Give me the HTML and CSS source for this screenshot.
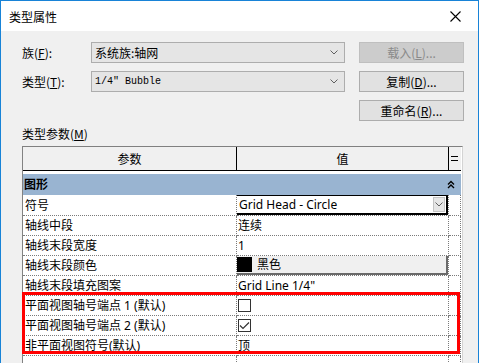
FILE: index.html
```html
<!DOCTYPE html>
<html lang="zh">
<head>
  <meta charset="UTF-8">
  <title>类型属性</title>
  <link rel="stylesheet" href="styles.css">
</head>
<body>
  <div class="window">
    <div class="titlebar">
      <span class="title">类型属性</span>
      <svg class="close" width="11" height="11" viewBox="0 0 11 11"><path d="M0.5 0.5L10.5 10.5M10.5 0.5L0.5 10.5" stroke="#000" stroke-width="1.1" fill="none"/></svg>
    </div>

    <div class="content">
      <div class="form-row">
        <label class="label">族(<u>F</u>):</label>
        <div class="combo">
          <span>系统族:轴网</span>
          <svg class="chev" width="8" height="5" viewBox="0 0 8 5"><path d="M0.5 0.5L4 4L7.5 0.5" stroke="#606060" fill="none"/></svg>
        </div>
        <button class="btn" disabled>载入(<u>L</u>)...</button>
      </div>
      <div class="form-row">
        <label class="label">类型(<u>T</u>):</label>
        <div class="combo">
          <span class="mono">1/4" Bubble</span>
          <svg class="chev" width="8" height="5" viewBox="0 0 8 5"><path d="M0.5 0.5L4 4L7.5 0.5" stroke="#606060" fill="none"/></svg>
        </div>
        <button class="btn">复制(<u>D</u>)...</button>
      </div>
      <div class="form-row">
        <button class="btn push">重命名(<u>R</u>)...</button>
      </div>

      <div class="section-label">类型参数(<u>M</u>)</div>

      <div class="grid">
        <table>
          <colgroup>
            <col class="c1"><col class="c2"><col class="c3">
          </colgroup>
          <tr class="head">
            <th>参数</th>
            <th>值</th>
            <th class="eq"><svg width="7" height="6" viewBox="0 0 7 6"><path d="M0 0.5H7M0 4.5H7" stroke="#000"/></svg></th>
          </tr>
          <tr class="group">
            <td colspan="3">
              <div class="group-inner">
                <span>图形</span>
                <svg width="8" height="9" viewBox="0 0 8 9"><path d="M1 4.5L4 1.5L7 4.5M1 8L4 5L7 8" stroke="#000" stroke-width="1.4" fill="none"/></svg>
              </div>
            </td>
          </tr>
          <tr>
            <td>符号</td>
            <td class="ctl">
              <div class="select">
                <span>Grid Head - Circle</span>
                <span class="drop"><svg width="8" height="5" viewBox="0 0 8 5"><path d="M0.5 0.5L4 4L7.5 0.5" stroke="#606060" fill="none"/></svg></span>
              </div>
            </td>
            <td></td>
          </tr>
          <tr><td>轴线中段</td><td>连续</td><td></td></tr>
          <tr><td>轴线末段宽度</td><td>1</td><td></td></tr>
          <tr>
            <td>轴线末段颜色</td>
            <td class="ctl"><div class="color"><span class="swatch"></span><span>黑色</span></div></td>
            <td></td>
          </tr>
          <tr><td>轴线末段填充图案</td><td>Grid Line 1/4"</td><td></td></tr>
          <tr><td>平面视图轴号端点 1 (默认)</td><td><span class="check"></span></td><td></td></tr>
          <tr>
            <td>平面视图轴号端点 2 (默认)</td>
            <td><span class="check"><svg width="11" height="9" viewBox="0 0 11 9"><path d="M1 4.5L4 7.5L10 1.5" stroke="#333" stroke-width="1.2" fill="none"/></svg></span></td>
            <td></td>
          </tr>
          <tr><td>非平面视图符号(默认)</td><td>顶</td><td></td></tr>
          <tr><td></td><td></td><td></td></tr>
        </table>
        <div class="highlight"></div>
      </div>
    </div>
  </div>
</body>
</html>
```

FILE: styles.css
```css
body {
  margin: 0;
  font-family: "Noto Sans CJK SC", sans-serif;
  font-size: 12px;
  color: #000;
}
.window {
  width: 479px;
  height: 363px;
  box-sizing: border-box;
  border: 1px solid #1883d7;
  border-bottom: none;
  background-color: #f0f0f0;
  overflow: hidden;
}
.titlebar {
  height: 30px;
  background: #fff;
  display: flex;
  align-items: center;
  justify-content: space-between;
  padding: 0 17px 0 8px;
}
.title {
  font-size: 12px;
}
.content {
  padding: 11px 14px 0 21px;
}
.form-row {
  display: flex;
  align-items: center;
  height: 21px;
  margin-bottom: 8px;
}
.label {
  width: 69px;
  flex-shrink: 0;
}
.combo {
  width: 254px;
  height: 21px;
  box-sizing: border-box;
  border: 1px solid #adadad;
  background: #e5e5e5;
  display: flex;
  align-items: center;
  justify-content: space-between;
  padding: 0 6px 0 3px;
}
.mono {
  font-family: "Liberation Mono", monospace;
  font-size: 10px;
}
.btn {
  margin-left: auto;
  width: 105px;
  height: 21px;
  box-sizing: border-box;
  border: 1px solid #adadad;
  background: #e1e1e1;
  font-family: inherit;
  font-size: 12px;
  padding: 0;
  color: #000;
}
.btn:disabled {
  background: #cccccc;
  border-color: #bfbfbf;
  color: #8a8a8a;
}
.section-label {
  height: 25px;
  line-height: 25px;
  margin-top: -8px;
}
.grid {
  position: relative;
  width: 441px;
  height: 300px;
  box-sizing: border-box;
  border-top: 1px solid #808080;
  border-left: 1px solid #828282;
  border-right: 1px solid #d4d4d4;
  background: #fff;
}
table {
  border-spacing: 0;
  table-layout: fixed;
  width: 438px;
}
col.c1 { width: 214px; }
col.c2 { width: 212px; }
col.c3 { width: 12px; }
td {
  height: 19px;
  padding: 0 0 0 2px;
  border-right: 1px dotted #7a7a7a;
  border-bottom: 1px dotted #7a7a7a;
  white-space: nowrap;
  overflow: hidden;
  font-family: "Noto Sans", "Noto Sans CJK SC", sans-serif;
  font-size: 12px;
  line-height: 19px;
}
td:nth-child(2) {
  padding-left: 1px;
}
.head th {
  height: 23px;
  padding: 0;
  background: #f0f0f0;
  border-right: 1px solid #000;
  border-bottom: 1px solid #000;
  font-weight: normal;
  font-size: 12px;
}
.head th.eq {
  border-right: none;
  padding-left: 2px;
}
.eq svg {
  display: block;
}
.group td {
  height: 21px;
  padding: 0;
  border: none;
  border-top: 3px solid #fff;
  background: #99b4d1;
}
.group-inner {
  display: flex;
  justify-content: space-between;
  align-items: center;
  padding: 0 6px 0 1px;
  font-weight: bold;
}
td.ctl {
  padding: 0;
}
.select {
  height: 20px;
  margin-left: -1px;
  box-sizing: border-box;
  border: 1px solid #000;
  border-right-width: 2px;
  border-bottom-width: 2px;
  display: flex;
  align-items: center;
  justify-content: space-between;
  padding: 0 1px 0 2px;
}
.drop {
  width: 12px;
  height: 15px;
  box-sizing: border-box;
  border: 1px solid #c4c4c4;
  background: #e6e6e6;
  display: flex;
  align-items: center;
  justify-content: center;
}
.color {
  height: 19px;
  margin-left: -1px;
  box-sizing: border-box;
  background: #f0f0f0;
  border-right: 2px solid #6a6a6a;
  border-bottom: 2px solid #6a6a6a;
  display: flex;
  align-items: center;
  gap: 5px;
}
.swatch {
  width: 16px;
  height: 15px;
  background: #000;
}
.check {
  display: inline-flex;
  align-items: center;
  justify-content: center;
  width: 13px;
  height: 13px;
  box-sizing: border-box;
  border: 1px solid #333;
  vertical-align: middle;
  margin-top: -3px;
}
.highlight {
  position: absolute;
  left: -1px;
  top: 145px;
  width: 438px;
  height: 62px;
  box-sizing: border-box;
  border: 3px solid #f00;
}
```
